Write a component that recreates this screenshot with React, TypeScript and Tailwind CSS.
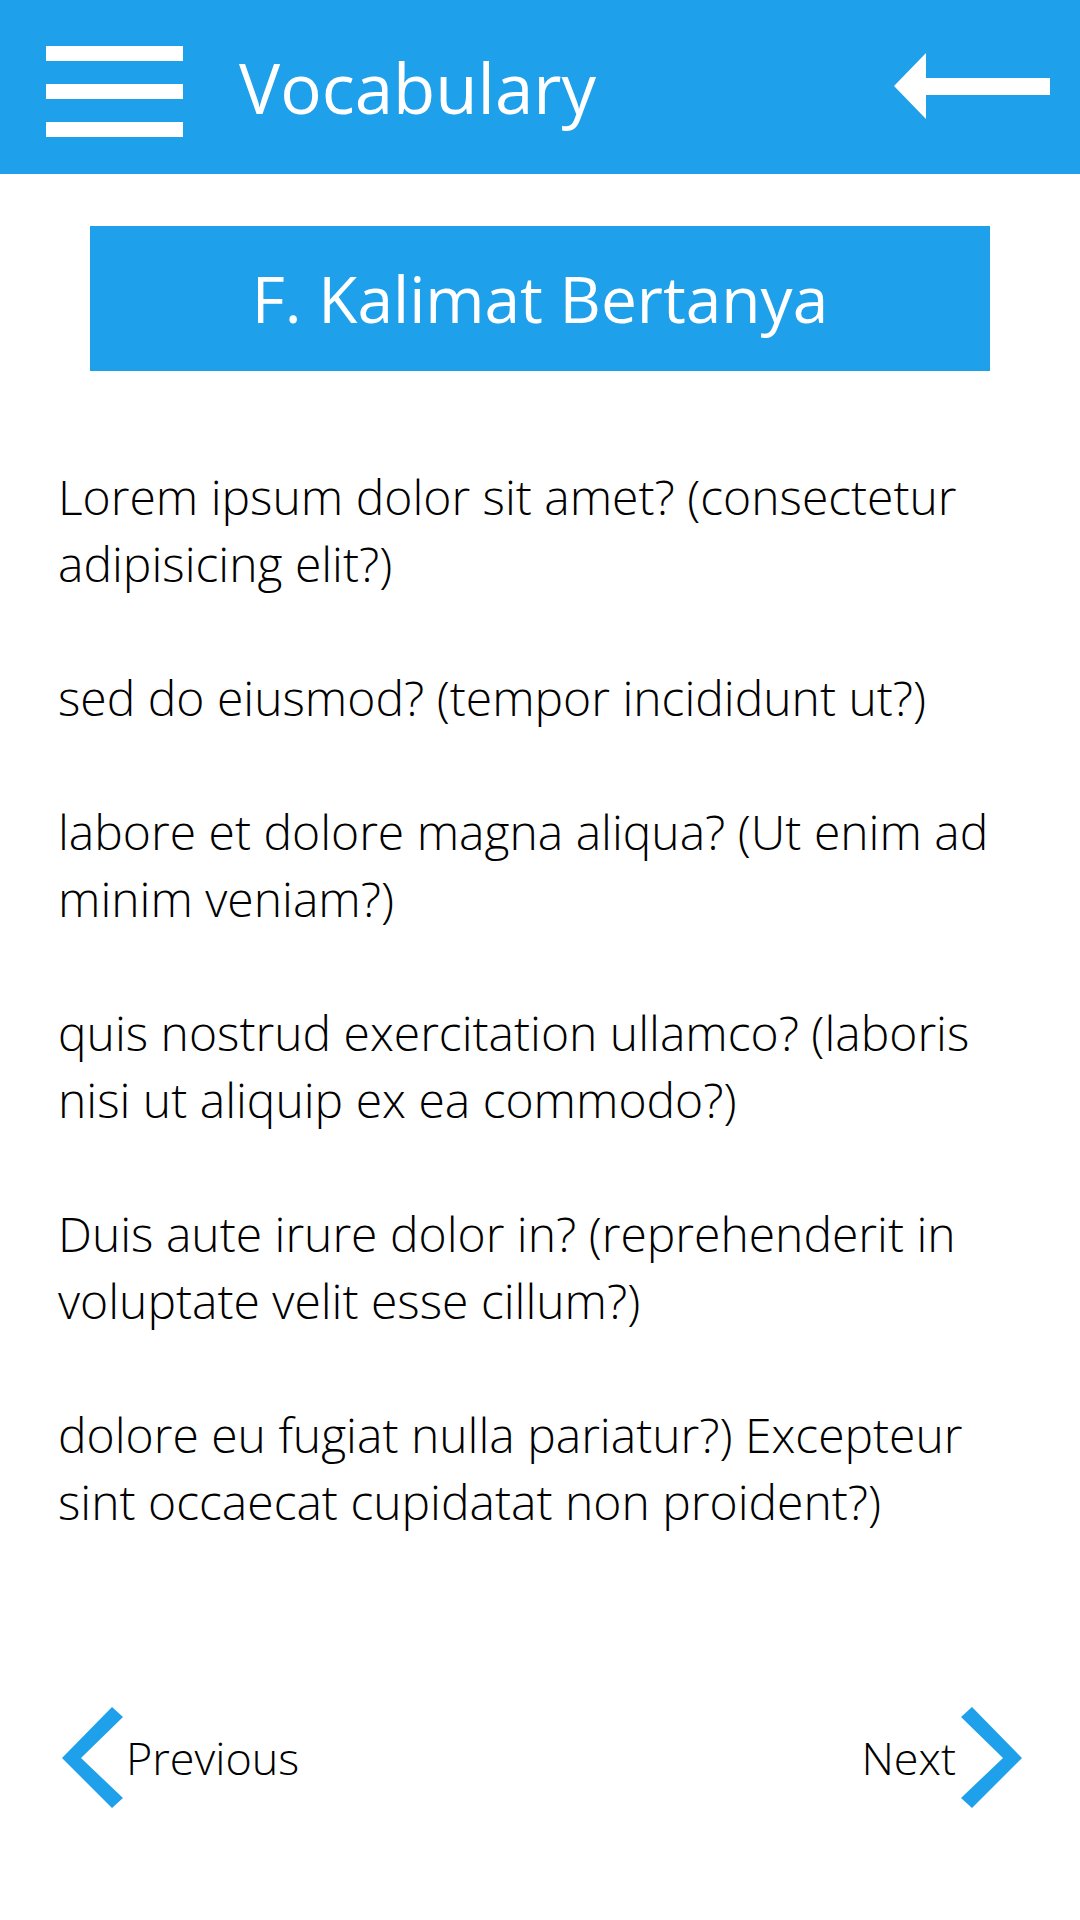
import React from "react";

const paragraphs = [
  "Lorem ipsum dolor sit amet? (consectetur adipisicing elit?)",
  "sed do eiusmod? (tempor incididunt ut?)",
  "labore et dolore magna aliqua? (Ut enim ad minim veniam?)",
  "quis nostrud exercitation ullamco? (laboris nisi ut aliquip ex ea commodo?)",
  "Duis aute irure dolor in? (reprehenderit in voluptate velit esse cillum?)",
  "dolore eu fugiat nulla pariatur?) Excepteur sint occaecat cupidatat non proident?)",
];

export default function App() {
  return (
    <div
      className="w-[1080px] h-[1920px] bg-white flex flex-col font-light text-black"
      style={{ fontFamily: '"Open Sans", "Noto Sans", sans-serif' }}
    >
      <header className="h-[174px] bg-[#1ea0eb] flex items-center shrink-0">
        <div className="ml-[46px] mt-[9px] flex flex-col gap-[23px]">
          <div className="w-[137px] h-[15px] bg-white" />
          <div className="w-[137px] h-[15px] bg-white" />
          <div className="w-[137px] h-[15px] bg-white" />
        </div>
        <h1 className="ml-[56px] text-[69px] leading-none text-white font-normal">Vocabulary</h1>
        <div className="ml-auto mr-[30px] mt-[-2px]">
          <svg width="156" height="66" viewBox="0 0 156 66">
            <path d="M0 33 L32 0 L32 25 L156 25 L156 42 L32 42 L32 66 Z" fill="white" />
          </svg>
        </div>
      </header>

      <div className="mt-[52px] mx-[90px] h-[145px] bg-[#1ea0eb] flex items-center justify-center">
        <span className="text-[64px] leading-none text-white font-normal">F. Kalimat Bertanya</span>
      </div>

      <div className="mt-[92px] pl-[58px] pr-[56px] text-[48px] leading-[67px]">
        {paragraphs.map((p, i) => (
          <p key={i} className={i < paragraphs.length - 1 ? "mb-[67px]" : ""}>
            {p}
          </p>
        ))}
      </div>

      <div className="mt-[172px] pl-[62px] pr-[58px] flex items-center justify-between">
        <div className="flex items-center">
          <svg width="61" height="101" viewBox="0 0 61 101">
            <path d="M50 0 L61 10 L19 51 L61 91 L50 101 L0 51 Z" fill="#1ea0eb" />
          </svg>
          <span className="ml-[3px] text-[45px] leading-none">Previous</span>
        </div>
        <div className="flex items-center">
          <span className="mr-[5px] text-[45px] leading-none">Next</span>
          <svg width="61" height="101" viewBox="0 0 61 101">
            <path d="M11 0 L0 10 L42 51 L0 91 L11 101 L61 51 Z" fill="#1ea0eb" />
          </svg>
        </div>
      </div>
    </div>
  );
}
